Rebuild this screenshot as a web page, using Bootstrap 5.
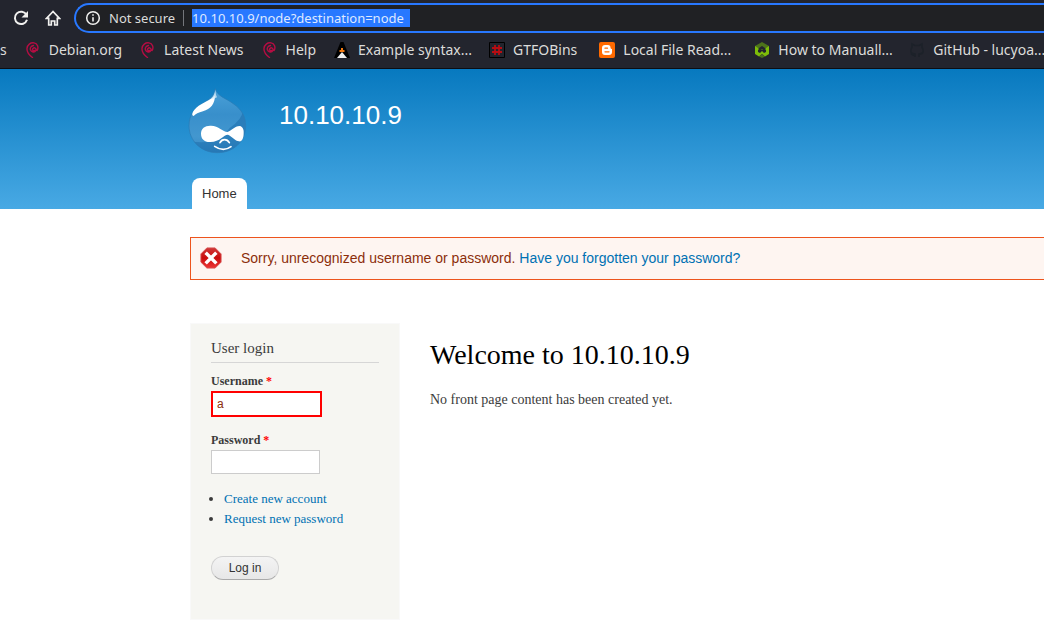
<!DOCTYPE html>
<html lang="en">
<head>
<meta charset="utf-8">
<meta name="viewport" content="width=device-width, initial-scale=1">
<title>Welcome to 10.10.10.9</title>
<link href="https://cdn.jsdelivr.net/npm/bootstrap@5.3.0/dist/css/bootstrap.min.css" rel="stylesheet">
<style>
  body { font-family: "Liberation Serif", serif; font-size: 14px; line-height: 20px; color: #3b3b3b; overflow-x: hidden; }
  a { color: #0071b3; text-decoration: none; }
  .sans { font-family: "Liberation Sans", sans-serif; }
  .browser-bar { font-family: "Noto Sans", sans-serif; background: #23252e; color: #dcdcda; border-bottom: 1px solid #0c0e14; }
  .toolbar { height: 36px; padding-left: 13px; }
  .tool-btn { width: 16px; height: 16px; color: #f1f1ef; margin-right: 16px; }
  .address { height: 30px; border: 2px solid #2878ff; background: #202124; font-size: 13px; margin-left: -3px; padding-left: 9px; }
  .address-sep { width: 1px; height: 16px; background: #74767b; margin: 0 8px; }
  .url-input { font-size: 13px; line-height: 18px; color: #dfe9ff; width: 218px; outline: 0; background: #2878ff; }
  .bookmarks { height: 32px; font-size: 14px; gap: 18px; padding-bottom: 4px; }
  .bookmarks a { color: #dcdcda; }
  .bookmarks svg { width: 16px; height: 16px; }
  .bookmark-long { width: 113px; }
  .site-head { height: 140px; background: linear-gradient(#0779bf, #48a9e4); padding-left: 188px; }
  .site-logo { margin-top: 3px; }
  .site-name { font-size: 26px; line-height: 30px; color: #fff; margin-left: 31px; margin-top: 15px; }
  .home-tab { background: #fff; color: #333; font-size: 13px; line-height: 31px; padding: 0 10px; margin-left: 4px; border-radius: 8px 8px 0 0; }
  .page-body { padding-left: 190px; padding-top: 28px; }
  .login-error { border: 1px solid #ed541d; background: #fef5f1; color: #8c2e0b; height: 43px; padding: 0 0 2px 9px; gap: 19px; }
  .login-box, .content-area { margin-top: 43px; }
  .login-box { width: 210px; height: 297px; background: #f6f6f2; border: 1px solid #f9f9f9; padding: 14px 20px; }
  .login-box h2 { font-size: 15px; line-height: 20px; padding-bottom: 4px; border-bottom: 1px solid #d6d6d6; margin-bottom: 8px; }
  .login-box label { font-size: 12px; line-height: 20px; font-weight: bold; }
  .second-label { margin-top: 13px; }
  .req { color: #f00; }
  .text-field { height: 24px; width: 109px; border: 1px solid #ccc; background: #fff; font-size: 12px; padding: 0 4px; color: #3b3b3b; }
  .text-field.bad { height: 26px; width: 111px; border: 2px solid #f00; color: #8c2e0b; }
  .login-links { font-size: 13px; padding-left: 13px; margin: 15px 0 27px; }
  .login-btn { width: 68px; height: 24px; border: 1px solid #d2d2d2; border-bottom-color: #aaa; background: linear-gradient(#f4f4f4, #e7e7e7); font-size: 12px; line-height: 20px; color: #333; }
  .content-area { margin-left: 30px; }
  .page-title { font-size: 28px; line-height: 34px; color: #000; margin: 15px 0 18px; }
</style>
</head>
<body>
<svg class="d-none" aria-hidden="true">
  <symbol id="swirl" viewBox="0 0 16 16"><path d="M9.500 8.500C7.800 9 7 7.500 8 6.500C9.500 5 11.700 6.500 10.800 8.600C9.800 10.700 6.300 10.400 5.400 7.800C4.800 5.500 6.500 3.800 8.500 3.500M12 8.500C14 5.500 12.500 1.500 9 .900C5.500 .300 2.300 2.800 2 6.400C1.700 10 4 13 7.500 15.500" fill="none" stroke="#b50d43" stroke-width="1.400" stroke-linecap="round"/></symbol>
</svg>
<div class="browser-bar">
  <div class="toolbar d-flex align-items-center">
    <button class="btn p-0 border-0 tool-btn d-flex" aria-label="Reload"><svg width="16" height="16" viewBox="0 0 16 16"><path d="M13.500 4.800A6.200 6.200 0 1 0 14 9.800" fill="none" stroke="currentColor" stroke-width="2"/><path d="M15 1v6.500H8.500z" fill="currentColor"/></svg></button>
    <button class="btn p-0 border-0 tool-btn d-flex" aria-label="Home"><svg width="16" height="16" viewBox="0 0 16 16"><path d="M8 1.500L1.500 8.300H3.700V15H6.300V11H9.700V15H12.300V8.300H14.500Z" fill="none" stroke="currentColor" stroke-width="1.700"/></svg></button>
    <div class="address d-flex align-items-center flex-grow-1 rounded-start-pill border-end-0">
      <svg class="me-2" width="16" height="16" viewBox="0 0 16 16"><circle cx="8" cy="8" r="6.300" fill="none" stroke="#f1f1ef" stroke-width="1.500"/><path d="M8 7.200V11.500M8 4.300V5.800" stroke="#f1f1ef" stroke-width="1.600"/></svg>
      <span>Not secure</span><span class="address-sep"></span>
      <input class="url-input border-0 p-0" aria-label="Address" value="10.10.10.9/node?destination=node">
    </div>
  </div>
  <nav class="bookmarks d-flex align-items-center text-nowrap" aria-label="Bookmarks">
    <a href="#">s</a>
    <a href="#" class="d-flex align-items-center gap-2"><svg><use href="#swirl"/></svg>Debian.org</a>
    <a href="#" class="d-flex align-items-center gap-2"><svg><use href="#swirl"/></svg>Latest News</a>
    <a href="#" class="d-flex align-items-center gap-2"><svg><use href="#swirl"/></svg>Help</a>
    <a href="#" class="d-flex align-items-center gap-2"><svg viewBox="0 0 16 16"><path d="M6.500 0h3L16 16H0z" fill="#000"/><path d="M8 10l5 6H3z" fill="#eee"/><path d="M7 6h2v2h1.500v2h-5V8H7z" fill="#f47a10"/></svg><span class="bookmark-long">Example syntax...</span></a>
    <a href="#" class="d-flex align-items-center gap-2"><svg viewBox="0 0 16 16"><path d="M.500.500h15v15H.500z" fill="#22242d" stroke="#000"/><path d="M6 3v10M10 3v10M3 6h10M3 10h10" stroke="#b80d12" stroke-width="1.800"/></svg>GTFOBins</a>
    <a href="#" class="d-flex align-items-center gap-2 ms-1"><svg viewBox="0 0 16 16"><rect width="16" height="16" rx="2" fill="#ff6a00"/><path d="M6 3h3q2.500 0 2.500 2.500 0 1.500 1.500 1.500v3q0 3-3 3H6q-3 0-3-3V6q0-3 3-3z" fill="#fff"/><path d="M6 6.200h2.500M6 9.800h4" stroke="#ff6a00" stroke-width="1.300" stroke-linecap="round"/></svg><span class="bookmark-long">Local File Read...</span></a>
    <a href="#" class="d-flex align-items-center gap-2"><svg viewBox="0 0 16 16"><path d="M8 0l7 4v4H1V4z" fill="#4d731b"/><path d="M1 4l3 2v4l2 1 2-2 2 2 2-1V6l3-2v8l-4 2.500L8 12l-3 2.500L1 12z" fill="#7dbd09"/><path d="M5 6l3-2 3 2v3L8 7 5 9z" fill="#23252e"/><path d="M5 14.500L8 12l3 2.500L8 16z" fill="#4d731b"/></svg><span class="bookmark-long">How to Manuall...</span></a>
    <a href="#" class="d-flex align-items-center gap-2"><svg viewBox="0 0 16 16"><path d="M6 15v-3C1 12 1 8 3 5.500V2l3 1.500h4L13 2v3.500C15 8 15 12 10 12v3M6 13.500q-2 .500-4-2" fill="none" stroke="#1c2129" stroke-width="1.500"/></svg><span>GitHub - lucyoa...</span></a>
  </nav>
</div>

<header class="site-head sans d-flex flex-column">
  <div class="d-flex align-items-start pt-3 flex-grow-1">
    <svg class="site-logo flex-shrink-0" width="60" height="66" viewBox="25 24 180 198" role="img" aria-label="Site logo">
      <defs><linearGradient id="drop" x1="0" y1="0" x2="0" y2="1"><stop offset="0" stop-color="#4ba1d8"/><stop offset=".4" stop-color="#388fcb"/><stop offset=".75" stop-color="#4397cf"/><stop offset="1" stop-color="#3587c3"/></linearGradient>
      <clipPath id="dropClip"><path id="dropShape" d="M107 26C113 50 139 54 162 72C185 88 198 109 198 138C198 184 162 218 113 218C64 218 28 182 28 137C28 106 44 85 69 70C90 57 102 51 107 26Z"/></clipPath></defs>
      <use href="#dropShape" fill="url(#drop)"/>
      <g clip-path="url(#dropClip)"><path d="M150 144Q188 118 190 90L210 80V225H28V183Q110 200 150 144Z" fill="#1466a6" opacity=".45"/></g>
      <use href="#dropShape" fill="none" stroke="#2a7ab4" stroke-width="2"/>
      <path d="M106 46C106 72 93 87 70 94C56 98 48 102 42 108C32 106 40 86 66 72C86 61 98 56 106 46Z" fill="#fff"/>
      <path d="M107 30C105 42 101 49 94 56C101 57 106 55 112 52C109 46 108 40 107 30Z" fill="#d5ebf7" opacity=".8"/>
      <path d="M64 161C64 144 77 136 94 137C117 138 130 155 143 156C154 153 165 138 180 138C190 140 193 150 192 160C192 175 187 186 178 184C166 182 157 170 145 164C133 163 122 185 92 186C75 187 64 177 64 161Z" fill="#fff"/>
      <path d="M121 188C127 176 142 176 149 188M105 199C121 210 139 211 154 200" fill="none" stroke="#fff" stroke-width="5" stroke-linecap="round"/>
    </svg>
    <div class="site-name">10.10.10.9</div>
  </div>
  <nav class="d-flex"><a href="#" class="home-tab">Home</a></nav>
</header>

<div class="page-body">
  <div class="login-error sans border-end-0 d-flex align-items-center text-nowrap" role="alert">
    <svg class="flex-shrink-0" width="22" height="22" viewBox="0 0 24 24"><defs><linearGradient id="stop" x1="0" y1="0" x2="0" y2="1"><stop offset="0" stop-color="#cf3838"/><stop offset=".5" stop-color="#c90c0c"/><stop offset="1" stop-color="#ee3636"/></linearGradient></defs><path d="M7.500 1h9L23 7.500v9L16.500 23h-9L1 16.500v-9z" fill="url(#stop)" stroke="#d65050" stroke-linejoin="round"/><path d="M7.500 7.500l9 9M16.500 7.500l-9 9" stroke="#fff" stroke-width="3.800" stroke-linecap="square"/></svg>
    <div>Sorry, unrecognized username or password. <a href="#">Have you forgotten your password?</a></div>
  </div>
  <div class="d-flex align-items-start">
    <aside class="login-box flex-shrink-0">
      <h2 class="fw-normal">User login</h2>
      <form>
        <label class="d-block" for="user">Username <span class="req">*</span></label>
        <input class="text-field bad sans d-block" id="user" value="a">
        <label class="d-block second-label" for="pass">Password <span class="req">*</span></label>
        <input class="text-field sans d-block" id="pass" type="password">
        <ul class="login-links"><li><a href="#">Create new account</a></li><li><a href="#">Request new password</a></li></ul>
        <button class="btn rounded-pill p-0 login-btn sans" type="button">Log in</button>
      </form>
    </aside>
    <main class="content-area">
      <h1 class="page-title fw-normal">Welcome to 10.10.10.9</h1>
      <p class="mb-0">No front page content has been created yet.</p>
    </main>
  </div>
</div>
<script src="https://cdn.jsdelivr.net/npm/bootstrap@5.3.0/dist/js/bootstrap.bundle.min.js"></script>
</body>
</html>
